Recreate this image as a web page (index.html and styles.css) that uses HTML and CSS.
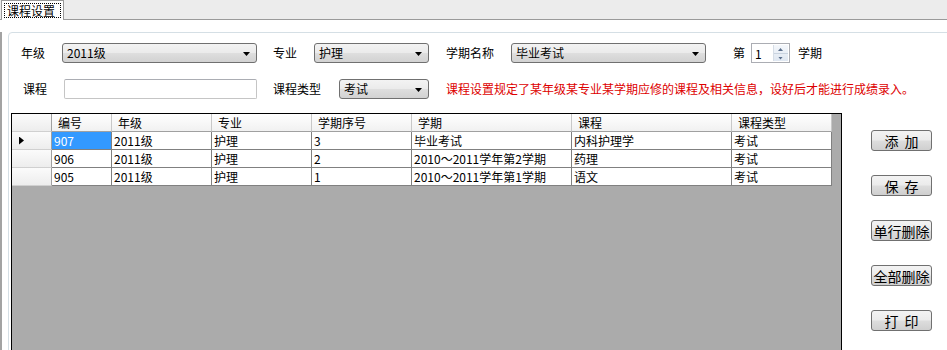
FILE: index.html
```html
<!DOCTYPE html>
<html lang="zh-CN">
<head>
  <meta charset="UTF-8" />
  <title>课程设置</title>
  <link rel="stylesheet" href="styles.css">
</head>
<body>
  <div class="tabbar">
    <div class="tab"><span>课程设置</span></div>
  </div>

  <div class="page">
    <div class="group">
      <div class="row">
        <span class="lbl lbl-grade">年级</span>
        <div class="combo w-grade">2011级<i class="arrow"></i></div>
        <span class="lbl lbl-major">专业</span>
        <div class="combo w-major">护理<i class="arrow"></i></div>
        <span class="lbl lbl-term">学期名称</span>
        <div class="combo w-term">毕业考试<i class="arrow"></i></div>
        <span class="lbl lbl-di">第</span>
        <div class="spin">
          <span class="spin-val">1</span>
          <span class="spin-btns"><i class="up"></i><i class="down"></i></span>
        </div>
        <span class="lbl lbl-xq">学期</span>
      </div>
      <div class="row">
        <span class="lbl lbl-course">课程</span>
        <div class="textbox w-course"></div>
        <span class="lbl lbl-type">课程类型</span>
        <div class="combo w-type">考试<i class="arrow"></i></div>
        <span class="notice">课程设置规定了某年级某专业某学期应修的课程及相关信息，设好后才能进行成绩录入。</span>
      </div>

      <div class="work">
        <div class="grid">
          <div class="grow head">
            <div class="cell rh"></div>
            <div class="cell">编号</div>
            <div class="cell">年级</div>
            <div class="cell">专业</div>
            <div class="cell">学期序号</div>
            <div class="cell">学期</div>
            <div class="cell">课程</div>
            <div class="cell">课程类型</div>
          </div>
          <div class="grow">
            <div class="cell rh"><i class="current"></i></div>
            <div class="cell selected">907</div>
            <div class="cell">2011级</div>
            <div class="cell">护理</div>
            <div class="cell">3</div>
            <div class="cell">毕业考试</div>
            <div class="cell">内科护理学</div>
            <div class="cell">考试</div>
          </div>
          <div class="grow">
            <div class="cell rh"></div>
            <div class="cell">906</div>
            <div class="cell">2011级</div>
            <div class="cell">护理</div>
            <div class="cell">2</div>
            <div class="cell">2010～2011学年第2学期</div>
            <div class="cell">药理</div>
            <div class="cell">考试</div>
          </div>
          <div class="grow">
            <div class="cell rh"></div>
            <div class="cell">905</div>
            <div class="cell">2011级</div>
            <div class="cell">护理</div>
            <div class="cell">1</div>
            <div class="cell">2010～2011学年第1学期</div>
            <div class="cell">语文</div>
            <div class="cell">考试</div>
          </div>
        </div>

        <div class="actions">
          <button class="btn spaced">添加</button>
          <button class="btn spaced">保存</button>
          <button class="btn">单行删除</button>
          <button class="btn">全部删除</button>
          <button class="btn spaced">打印</button>
        </div>
      </div>
    </div>
  </div>
</body>
</html>
```

FILE: styles.css
```css
* {
  box-sizing: border-box;
}
html, body {
  margin: 0;
  height: 100%;
  overflow: hidden;
}
body {
  font-family: "Noto Sans CJK SC", "Liberation Sans", sans-serif;
  font-size: 12px;
  line-height: 1;
  color: #000;
  background: #fff;
}

/* tab strip */
.tabbar {
  height: 20px;
  background: #ececec;
  border-bottom: 1px solid #9a9a9a;
  display: flex;
  padding-left: 1px;
}
.tab {
  width: 63px;
  height: 20px;
  background: #fff;
  border: 1px solid #9a9a9a;
  border-bottom: none;
  padding: 2px 2px 0;
}
.tab span {
  display: flex;
  align-items: center;
  height: 15px;
  padding-left: 2px;
  border: 1px dotted #000;
}

.page {
  height: calc(100% - 20px);
  border-left: 2px solid #a3a3a3;
}

/* box around filters, grid and buttons */
.group {
  height: 400px;
  margin: 12px -20px 0 6px;
  padding-top: 10px;
  border: 1px solid #d5dfe5;
  border-radius: 4px;
}
.row {
  display: flex;
  align-items: center;
  height: 20px;
}
.row + .row {
  margin-top: 16px;
}
.lbl {
  flex-shrink: 0;
}
.lbl-grade { margin-left: 12px; width: 41px; }
.lbl-course { margin-left: 14px; width: 41px; }
.lbl-major { margin-left: 16px; width: 41px; }
.lbl-type { margin-left: 16px; width: 66px; }
.lbl-term { margin-left: 17px; width: 65px; }
.lbl-di { margin-left: 27px; width: 18px; }
.lbl-xq { margin-left: 8px; }

.combo {
  position: relative;
  height: 20px;
  padding-left: 4px;
  display: flex;
  align-items: center;
  border: 1px solid #707070;
  border-radius: 3px;
  background: linear-gradient(#f3f3f3 0%, #ebebeb 48%, #dedede 52%, #d2d2d2 100%);
}
.arrow {
  position: absolute;
  right: 6px;
  top: 8px;
  width: 7px;
  height: 4px;
  background: #000;
  clip-path: polygon(0 0, 100% 0, 50% 100%);
}
.w-grade { width: 195px; }
.w-major { width: 115px; }
.w-term { width: 195px; }
.w-type { width: 90px; }

.textbox {
  height: 20px;
  border: 1px solid #c5c5c5;
  border-top-color: #abadb3;
  border-radius: 2px;
  background: #fff;
}
.w-course { width: 193px; }

.spin {
  width: 39px;
  height: 20px;
  display: flex;
  border: 1px solid #abadb3;
  background: #fff;
}
.spin-val {
  flex: 1;
  padding: 1px 0 0 3px;
  display: flex;
  align-items: center;
}
.spin-btns {
  width: 15px;
  margin: 1px;
  display: flex;
  flex-direction: column;
  border-left: 1px solid #d6dde6;
  background: linear-gradient(#f4f7fb, #dfe7f1);
}
.spin-btns i {
  flex: 1;
  position: relative;
}
.spin-btns i + i {
  border-top: 1px solid #c9d3df;
}
.spin-btns i::after {
  content: "";
  position: absolute;
  left: 4px;
  top: 3px;
  width: 5px;
  height: 3px;
  background: #5b6f8c;
}
.spin-btns .up::after {
  clip-path: polygon(50% 0, 100% 100%, 0 100%);
}
.spin-btns .down::after {
  clip-path: polygon(0 0, 100% 0, 50% 100%);
}

.notice {
  margin-left: 17px;
  color: #dd0000;
  white-space: nowrap;
}

/* data grid + buttons */
.work {
  display: flex;
  margin: 14px 0 0 2px;
}
.grid {
  width: 831px;
  height: 260px;
  flex-shrink: 0;
  border: 1px solid #000;
  background: #ababab;
}
.grow {
  display: grid;
  grid-template-columns: 40px 60px 100px 100px 100px 160px 160px 100px;
  height: 18px;
  width: 820px;
  background: #fff;
}
.cell {
  display: flex;
  align-items: center;
  padding-left: 2px;
  white-space: nowrap;
  border-right: 1px solid #808080;
  border-bottom: 1px solid #808080;
}
.head .cell {
  padding-left: 6px;
  background: linear-gradient(#ffffff, #f1f1f1);
  border-right-color: #c8c8c8;
  border-bottom-color: #a0a0a0;
}
.cell.rh {
  background: linear-gradient(#fbfbfb, #ededed);
  border-right-color: #a0a0a0;
  border-bottom-color: #d0d0d0;
  padding-left: 7px;
}
.head .cell.rh {
  border-right-color: #a0a0a0;
}
.current {
  width: 5px;
  height: 8px;
  background: #000;
  clip-path: polygon(0 0, 100% 50%, 0 100%);
}
.cell.selected {
  background: #3399ff;
  color: #fff;
}

.actions {
  margin-left: 29px;
  padding-top: 17px;
  display: flex;
  flex-direction: column;
  gap: 24px;
}
.btn {
  width: 61px;
  height: 21px;
  padding: 0;
  font-family: inherit;
  font-size: 14px;
  line-height: 1;
  color: #000;
  border: 1px solid #707070;
  border-radius: 3px;
  background: linear-gradient(#f3f3f3 0%, #ebebeb 48%, #dddddd 52%, #cfcfcf 100%);
}
.btn.spaced {
  letter-spacing: 6px;
  text-indent: 6px;
}
```
